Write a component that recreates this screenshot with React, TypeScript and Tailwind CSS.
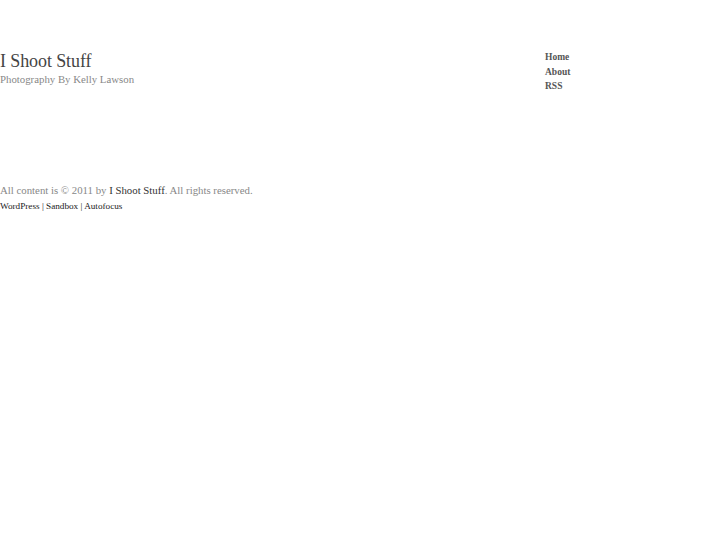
export default function App() {
  return (
    <div className="min-h-[545px] bg-white font-['Liberation_Serif',serif]">
      {/* Header */}
      <div className="flex pt-[50px]">
        <div className="w-[545px]">
          <h1 className="text-[18px] leading-[23px] text-[#444] tracking-[-0.1px]">
            <a href="#">I Shoot Stuff</a>
          </h1>
          <p className="text-[10.8px] leading-[13px] text-[#888]">Photography By Kelly Lawson</p>
        </div>
        <ul className="text-[9.5px] leading-[14.5px] font-bold text-[#555]">
          <li><a href="#">Home</a></li>
          <li><a href="#">About</a></li>
          <li><a href="#">RSS</a></li>
        </ul>
      </div>

      {/* Footer */}
      <div className="pt-[88px]">
        <p className="text-[10.8px] leading-[16px] text-[#888]">
          All content is © 2011 by <a href="#" className="text-[#333]">I Shoot Stuff</a>. All rights reserved.
        </p>
        <p className="pt-[1px] text-[9.2px] leading-[14px] text-[#222]">
          <a href="#">WordPress</a> | <a href="#">Sandbox</a> | <a href="#">Autofocus</a>
        </p>
      </div>
    </div>
  );
}
